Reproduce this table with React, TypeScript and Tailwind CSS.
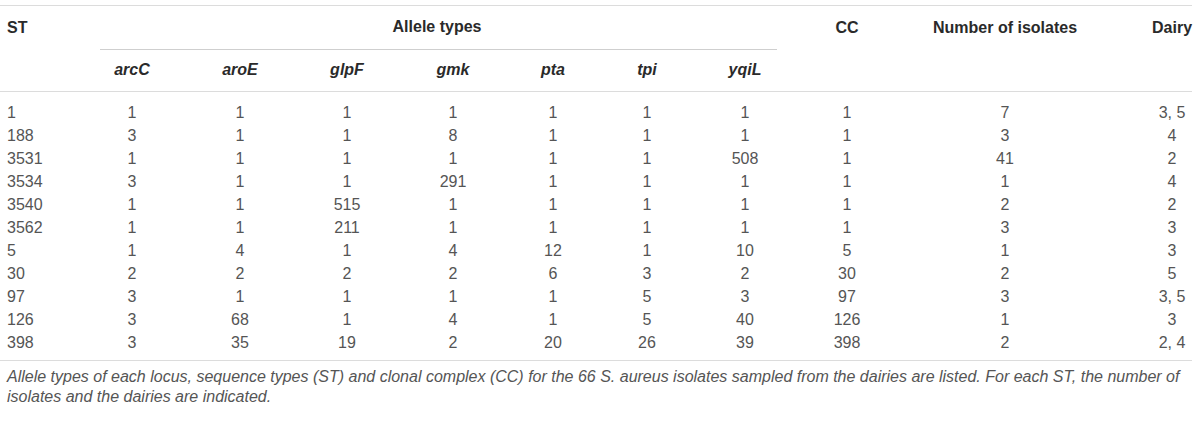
import React from 'react';

type Row = {
  st: string;
  alleles: string[];
  cc: string;
  count: string;
  dairy: string;
};

const loci = ['arcC', 'aroE', 'glpF', 'gmk', 'pta', 'tpi', 'yqiL'];

const rows: Row[] = [
  { st: '1', alleles: ['1', '1', '1', '1', '1', '1', '1'], cc: '1', count: '7', dairy: '3, 5' },
  { st: '188', alleles: ['3', '1', '1', '8', '1', '1', '1'], cc: '1', count: '3', dairy: '4' },
  { st: '3531', alleles: ['1', '1', '1', '1', '1', '1', '508'], cc: '1', count: '41', dairy: '2' },
  { st: '3534', alleles: ['3', '1', '1', '291', '1', '1', '1'], cc: '1', count: '1', dairy: '4' },
  { st: '3540', alleles: ['1', '1', '515', '1', '1', '1', '1'], cc: '1', count: '2', dairy: '2' },
  { st: '3562', alleles: ['1', '1', '211', '1', '1', '1', '1'], cc: '1', count: '3', dairy: '3' },
  { st: '5', alleles: ['1', '4', '1', '4', '12', '1', '10'], cc: '5', count: '1', dairy: '3' },
  { st: '30', alleles: ['2', '2', '2', '2', '6', '3', '2'], cc: '30', count: '2', dairy: '5' },
  { st: '97', alleles: ['3', '1', '1', '1', '1', '5', '3'], cc: '97', count: '3', dairy: '3, 5' },
  { st: '126', alleles: ['3', '68', '1', '4', '1', '5', '40'], cc: '126', count: '1', dairy: '3' },
  { st: '398', alleles: ['3', '35', '19', '2', '20', '26', '39'], cc: '398', count: '2', dairy: '2, 4' },
];

const App: React.FC = () => {
  return (
    <div className="w-[1200px] h-[447px] bg-white pt-[5px] font-['Liberation_Sans',Arial,sans-serif]">
      <table className="table-fixed w-[1192px] border-collapse">
        <colgroup>
          <col className="w-[78px]" />
          <col className="w-[108px]" />
          <col className="w-[108px]" />
          <col className="w-[106px]" />
          <col className="w-[106px]" />
          <col className="w-[94px]" />
          <col className="w-[94px]" />
          <col className="w-[102px]" />
          <col className="w-[102px]" />
          <col className="w-[254px]" />
          <col className="w-[40px]" />
        </colgroup>
        <thead className="text-[16px] font-bold text-[#2a2a2a]">
          <tr className="border-t border-[#dcdcdc]">
            <th className="h-[44px] pl-[7px] text-left align-middle">ST</th>
            <th colSpan={7} className="h-[44px] p-0 pt-[10px] align-top">
              <div className="h-[22px] leading-[22px] mb-[11px]">Allele types</div>
              <div className="ml-[22px] mr-[19px] border-b border-[#cfcfcf]" />
            </th>
            <th className="h-[44px] align-middle">CC</th>
            <th className="h-[44px] pr-[40px] align-middle whitespace-nowrap">Number of isolates</th>
            <th className="h-[44px] align-middle text-right whitespace-nowrap">Dairy</th>
          </tr>
          <tr className="border-b border-[#dcdcdc]">
            <th className="h-[41px]" />
            {loci.map((l) => (
              <th key={l} className="h-[41px] italic align-middle">
                {l}
              </th>
            ))}
            <th className="h-[41px]" />
            <th className="h-[41px]" />
            <th className="h-[41px]" />
          </tr>
        </thead>
        <tbody className="text-[16px] text-[#555] border-b border-[#dcdcdc]">
          {rows.map((r, i) => {
            // first and last rows carry the extra space next to the rules
            const pad = i === 0 ? 'pt-[9px]' : i === rows.length - 1 ? 'pb-[6px]' : '';
            return (
              <tr key={r.st}>
                <td className={`pl-[7px] text-left leading-[23px] ${pad}`}>{r.st}</td>
                {r.alleles.map((a, j) => (
                  <td key={j} className={`text-center leading-[23px] ${pad}`}>
                    {a}
                  </td>
                ))}
                <td className={`text-center leading-[23px] ${pad}`}>{r.cc}</td>
                <td className={`text-center pr-[40px] leading-[23px] ${pad}`}>{r.count}</td>
                <td className={`text-center leading-[23px] whitespace-nowrap ${pad}`}>{r.dairy}</td>
              </tr>
            );
          })}
        </tbody>
      </table>
      <p className="w-[1192px] pl-[7px] pt-[6px] text-[16px] leading-[20px] italic text-[#555]">
        Allele types of each locus, sequence types (ST) and clonal complex (CC) for the 66 S. aureus isolates sampled
        from the dairies are listed. For each ST, the number of isolates and the dairies are indicated.
      </p>
    </div>
  );
};

export default App;
